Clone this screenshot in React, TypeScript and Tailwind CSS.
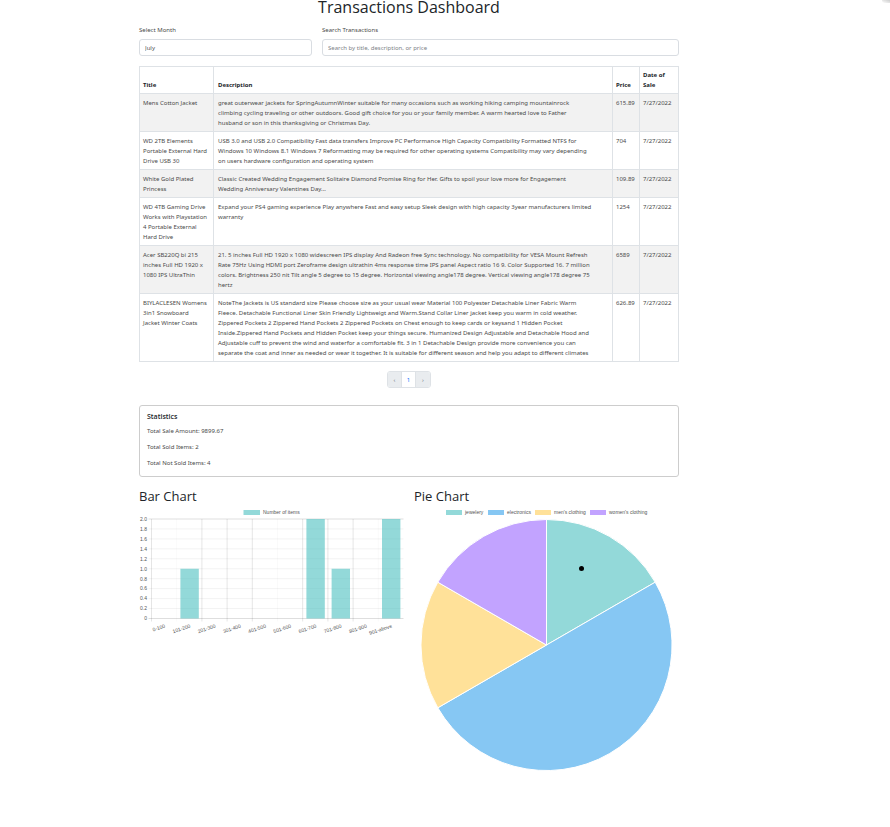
const rows = [
  {
    title: "Mens Cotton Jacket",
    lines: [
      "great outerwear jackets for SpringAutumnWinter suitable for many occasions such as working hiking camping mountainrock",
      "climbing cycling traveling or other outdoors. Good gift choice for you or your family member. A warm hearted love to Father",
      "husband or son in this thanksgiving or Christmas Day.",
    ],
    price: "615.89",
  },
  {
    title: "WD 2TB Elements\nPortable External Hard\nDrive USB 30",
    lines: [
      "USB 3.0 and USB 2.0 Compatibility Fast data transfers Improve PC Performance High Capacity Compatibility Formatted NTFS for",
      "Windows 10 Windows 8.1 Windows 7 Reformatting may be required for other operating systems Compatibility may vary depending",
      "on users hardware configuration and operating system",
    ],
    price: "704",
  },
  {
    title: "White Gold Plated\nPrincess",
    lines: [
      "Classic Created Wedding Engagement Solitaire Diamond Promise Ring for Her. Gifts to spoil your love more for Engagement",
      "Wedding Anniversary Valentines Day...",
    ],
    price: "109.89",
  },
  {
    title: "WD 4TB Gaming Drive\nWorks with Playstation\n4 Portable External\nHard Drive",
    lines: [
      "Expand your PS4 gaming experience Play anywhere Fast and easy setup Sleek design with high capacity 3year manufacturers limited",
      "warranty",
    ],
    price: "1254",
  },
  {
    title: "Acer SB220Q bi 215\ninches Full HD 1920 x\n1080 IPS UltraThin",
    lines: [
      "21. 5 inches Full HD 1920 x 1080 widescreen IPS display And Radeon free Sync technology. No compatibility for VESA Mount Refresh",
      "Rate 75Hz Using HDMI port Zeroframe design ultrathin 4ms response time IPS panel Aspect ratio 16 9. Color Supported 16. 7 million",
      "colors. Brightness 250 nit Tilt angle 5 degree to 15 degree. Horizontal viewing angle178 degree. Vertical viewing angle178 degree 75",
      "hertz",
    ],
    price: "6589",
  },
  {
    title: "BIYLACLESEN Womens\n3in1 Snowboard\nJacket Winter Coats",
    lines: [
      "NoteThe Jackets is US standard size Please choose size as your usual wear Material 100 Polyester Detachable Liner Fabric Warm",
      "Fleece. Detachable Functional Liner Skin Friendly Lightweigt and Warm.Stand Collar Liner jacket keep you warm in cold weather.",
      "Zippered Pockets 2 Zippered Hand Pockets 2 Zippered Pockets on Chest enough to keep cards or keysand 1 Hidden Pocket",
      "Inside.Zippered Hand Pockets and Hidden Pocket keep your things secure. Humanized Design Adjustable and Detachable Hood and",
      "Adjustable cuff to prevent the wind and waterfor a comfortable fit. 3 in 1 Detachable Design provide more convenience you can",
      "separate the coat and inner as needed or wear it together. It is suitable for different season and help you adapt to different climates",
    ],
    price: "626.89",
  },
];

const bars = [
  { label: "0-100", value: 0 },
  { label: "101-200", value: 1 },
  { label: "201-300", value: 0 },
  { label: "301-400", value: 0 },
  { label: "401-500", value: 0 },
  { label: "501-600", value: 0 },
  { label: "601-700", value: 2 },
  { label: "701-800", value: 1 },
  { label: "801-900", value: 0 },
  { label: "901-above", value: 2 },
];
const ticks = ["0", "0.2", "0.4", "0.6", "0.8", "1.0", "1.2", "1.4", "1.6", "1.8", "2.0"];

function BarChart() {
  const left = 12.5;
  const bottom = 113.5;
  const step = 25.2;
  const unit = 49.75;
  return (
    <svg viewBox="0 0 265 135" className="block h-auto w-full" role="img" aria-label="Bar Chart" fontFamily="'Liberation Sans', Arial, sans-serif" fontSize="5" fill="#555">
      <rect x="104.5" y="5" width="16.5" height="5" fill="#93d9d9" />
      <text x="124" y="9.3">Number of items</text>
      {ticks.map((t, i) => {
        const y = bottom - (i * unit) / 5;
        return (
          <g key={t}>
            <line x1={left - 3} x2={left + step * 10} y1={y} y2={y} stroke="#000" strokeOpacity={i === 0 || i === 10 ? 0.13 : 0.05} />
            <text x={left - 4.5} y={y + 1.8} textAnchor="end">{t}</text>
          </g>
        );
      })}
      {bars.map((b, i) => {
        const x = left + i * step;
        const h = b.value * unit;
        return (
          <g key={b.label}>
            <line x1={x} x2={x} y1={bottom - 2 * unit} y2={bottom + 3} stroke="#000" strokeOpacity={i === 1 || i === 5 || i === 9 ? 0.02 : 0.1} />
            {h > 0 && <rect x={x + 3.7} y={bottom - h} width="18.4" height={h} fill="#4bc0c0" fillOpacity="0.6" />}
            <text transform={`translate(${x + 14} ${bottom + 9}) rotate(-18)`} textAnchor="end">{b.label}</text>
          </g>
        );
      })}
    </svg>
  );
}

const slices = [
  { label: "jewelery", color: "#93d9d9", d: "M132.5 140V14.5A125.5 125.5 0 0 1 241.2 77.2Z", x: 32 },
  { label: "electronics", color: "#86c7f3", d: "M132.5 140L241.2 77.2A125.5 125.5 0 0 1 23.8 202.8Z", x: 74 },
  { label: "men's clothing", color: "#ffe199", d: "M132.5 140L23.8 202.8A125.5 125.5 0 0 1 23.8 77.2Z", x: 121 },
  { label: "women's clothing", color: "#c2a3ff", d: "M132.5 140L23.8 77.2A125.5 125.5 0 0 1 132.5 14.5Z", x: 176 },
];

function PieChart() {
  return (
    <svg viewBox="0 0 265 270" className="block h-auto w-full" role="img" aria-label="Pie Chart" fontFamily="'Liberation Sans', Arial, sans-serif" fontSize="5" fill="#555">
      {slices.map((s) => (
        <g key={s.label}>
          <rect x={s.x} y="5" width="16" height="5" fill={s.color} />
          <text x={s.x + 19} y="9.3">{s.label}</text>
          <path d={s.d} fill={s.color} stroke="#fff" strokeWidth="1" />
        </g>
      ))}
      <circle cx="167.5" cy="63.5" r="2.5" fill="#000" />
    </svg>
  );
}

export default function App() {
  const cell = "border border-[#dee2e6] pl-[3px] pr-[2px] pt-1 pb-[3px]";
  const descriptionCell = "border border-[#dee2e6] px-1 pt-1 pb-[3px]";
  const head = "border border-[#dee2e6] pl-[3px] pr-[2px] py-[3px] text-left align-bottom font-bold text-[#212529]";
  const descriptionHead = "border border-[#dee2e6] px-1 py-[3px] text-left align-bottom font-bold text-[#212529]";
  const field = "h-[17px] w-full appearance-none rounded-[3px] border border-[#d9dde2] bg-white px-[5px] text-[#555] placeholder:text-[#7d8287]";
  return (
    <div className="min-h-screen bg-white pr-[72px] font-['Noto_Sans','Open_Sans',sans-serif] text-[6px] leading-[10px] text-[#4a4a4a]">
      <div className="absolute top-0 right-0 h-[3px] w-2 rounded-bl-full bg-gradient-to-bl from-[#ccc] to-white" />
      <main className="mx-auto w-full max-w-[540px]">
        <h1 className="pb-[11px] text-center font-['Open_Sans',sans-serif] text-[16px] leading-[14px] font-medium text-[#212529]">Transactions Dashboard</h1>
        <div className="grid grid-cols-[173fr_357fr] gap-[10px]">
          <div>
            <label htmlFor="month" className="mb-1 block">Select Month</label>
            <select id="month" className={field} defaultValue="July">
              <option>July</option>
            </select>
          </div>
          <div>
            <label htmlFor="search" className="mb-1 block">Search Transactions</label>
            <input id="search" type="text" className={field} placeholder="Search by title, description, or price" />
          </div>
        </div>

        <table className="mt-[10px] w-full table-fixed border-collapse">
          <colgroup>
            <col className="w-[74px]" />
            <col />
            <col className="w-[27px]" />
            <col className="w-[39px]" />
          </colgroup>
          <thead>
            <tr>
              <th className={head}>Title</th>
              <th className={descriptionHead}>Description</th>
              <th className={head}>Price</th>
              <th className={head}>Date of<br />Sale</th>
            </tr>
          </thead>
          <tbody>
            {rows.map((r) => (
              <tr key={r.title} className="align-top odd:bg-[#f2f2f2]">
                <td className={`${cell} whitespace-pre-line`}>{r.title}</td>
                <td className={`${descriptionCell} whitespace-pre-line`}>{r.lines.join("\n")}</td>
                <td className={cell}>{r.price}</td>
                <td className={cell}>7/27/2022</td>
              </tr>
            ))}
          </tbody>
        </table>

        <nav aria-label="Pages" className="mt-[9px] flex justify-center">
          <div className="flex h-[17px] divide-x divide-[#dee2e6] overflow-hidden rounded-[3px] border border-[#dee2e6]">
            <button type="button" className="w-[14px] bg-[#e9ecef] text-[#6c757d]">‹</button>
            <button type="button" className="w-[14px] bg-white text-[#0d6efd]">1</button>
            <button type="button" className="w-[14px] bg-[#e9ecef] text-[#6c757d]">›</button>
          </div>
        </nav>

        <section className="mt-[17px] rounded-[3px] border border-[#cdcdcd] px-[7px] pt-[6px] pb-2">
          <h2 className="mb-1 font-['Open_Sans',sans-serif] text-[7px] leading-[10px] font-semibold text-[#212529]">Statistics</h2>
          <div className="space-y-[6px]">
            <p>Total Sale Amount: 9899.67</p>
            <p>Total Sold Items: 2</p>
            <p>Total Not Sold Items: 4</p>
          </div>
        </section>

        <div className="mt-[10px] grid grid-cols-2 gap-[10px] font-['Open_Sans',sans-serif]">
          <section>
            <h2 className="text-[13px] leading-[18px] font-medium text-[#212529]">Bar Chart</h2>
            <BarChart />
          </section>
          <section>
            <h2 className="text-[13px] leading-[18px] font-medium text-[#212529]">Pie Chart</h2>
            <PieChart />
          </section>
        </div>
      </main>
    </div>
  );
}
